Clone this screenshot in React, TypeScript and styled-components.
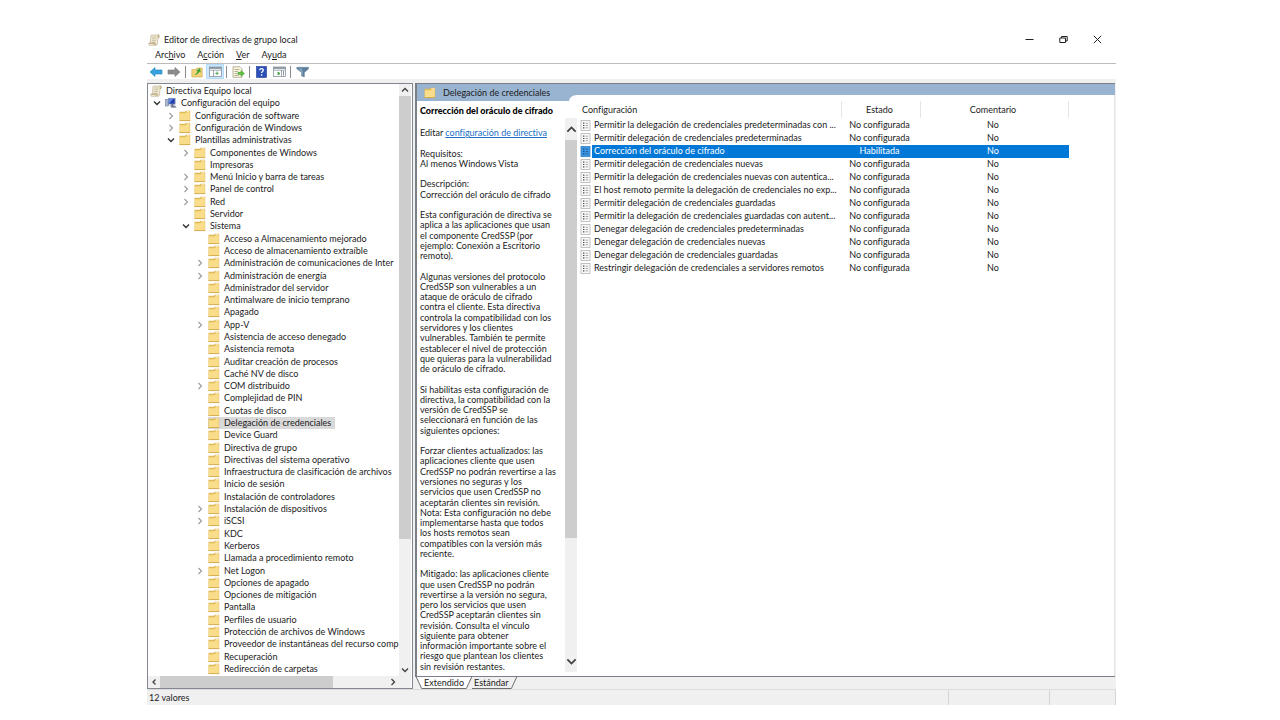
import React from "react";
import styled, { createGlobalStyle, css } from "styled-components";

const Global = createGlobalStyle`
  * { box-sizing: border-box; }
  body {
    margin: 0;
    background: #fff;
    color: #1b1b1b;
    font: 9px/12px Lato, "Open Sans", sans-serif;
    font-variant-ligatures: none;
  }
  button { font: inherit; color: inherit; background: none; border: 0; padding: 0; margin: 0; }
  svg { display: block; flex: none; }
`;

const Page = styled.div`
  min-height: 100vh;
  padding: 32px 164px 15px 147px;
  display: flex;
  flex-direction: column;
`;
const Window = styled.div`
  flex: 1;
  display: flex;
  flex-direction: column;
`;
const TitleBar = styled.header`
  height: 15px;
  padding: 0 2px 0 1px;
  display: flex;
  align-items: center;
  gap: 4px;
`;
const Title = styled.h1`
  margin: 0;
  flex: 1;
  font-size: 9px;
  font-weight: 400;
`;
const WindowButton = styled.button`
  width: 34px;
  height: 14px;
  display: flex;
  justify-content: center;
  align-items: center;
`;
const WindowButtons = styled.div`
  display: flex;
`;
const MenuBar = styled.nav`
  height: 16px;
  display: flex;
  align-items: center;
  padding-left: 2px;
`;
const MenuButton = styled.button`
  padding: 0 6px;
`;
const Toolbar = styled.div`
  height: 16px;
  border-top: 1px solid #bcbcbc;
  display: flex;
  align-items: center;
`;
const ToolButton = styled.button<{ $on?: boolean }>`
  width: 18px;
  height: 15px;
  display: flex;
  align-items: center;
  justify-content: center;
  ${(p) => p.$on && css`background: #cce8ff; box-shadow: inset 0 0 0 1px #b4dcf8;`}
`;
const Separator = styled.span`
  width: 1px;
  height: 12px;
  margin: 0 2px;
  background: #8a8a8a;
`;
const Main = styled.main`
  flex: 1;
  display: flex;
  gap: 2px;
  padding-top: 4px;
  background: #f0f0f0;
`;

/* Tree pane */
const TreePane = styled.section`
  width: 266px;
  flex: none;
  border: 1px solid #828790;
  background: #fff;
  display: flex;
  flex-direction: column;
  padding-right: 1px;
`;
const TreeArea = styled.div`
  flex: 1;
  display: flex;
`;
const Tree = styled.ul`
  list-style: none;
  margin: 0;
  padding: 1px 0;
  flex: 1;
  min-width: 0;
  overflow: hidden;
  display: grid;
  grid-auto-rows: minmax(12px, 1fr);
`;
const indents = [2, 3, 17, 32, 46];
const TreeRow = styled.li<{ $level: number }>`
  padding-left: ${(p) => indents[p.$level]}px;
  display: flex;
  align-items: center;
  white-space: nowrap;
`;
const Twisty = styled.button`
  width: 14px;
  flex: none;
  padding-left: 2px;
`;
const TreeLabel = styled.span<{ $selected?: boolean }>`
  display: flex;
  align-items: center;
  gap: 4px;
  height: 12px;
  padding-right: 4px;
  background: ${(p) => (p.$selected ? "#d9d9d9" : "transparent")};
`;

/* Scroll bars */
const Track = styled.div<{ $horizontal?: boolean }>`
  flex: none;
  background: #f0f0f0;
  display: flex;
  flex-direction: ${(p) => (p.$horizontal ? "row" : "column")};
  ${(p) => (p.$horizontal ? "height: 12px; padding-right: 12px;" : "width: 12px;")}
`;
const ScrollButton = styled.button`
  width: 12px;
  height: 12px;
  display: flex;
  align-items: center;
  justify-content: center;
`;
const TallScrollButton = styled(ScrollButton)`
  height: 22px;
`;
const Groove = styled.div<{ $horizontal?: boolean }>`
  flex: 1;
  display: flex;
  flex-direction: ${(p) => (p.$horizontal ? "row" : "column")};
`;
const Thumb = styled.div<{ $share: number }>`
  flex: 0 0 ${(p) => p.$share}%;
  background: #cdcdcd;
`;

/* Detail pane */
const DetailPane = styled.section`
  flex: 1;
  min-width: 0;
  display: flex;
  flex-direction: column;
`;
const DetailFrame = styled.div`
  flex: 1;
  display: flex;
  margin-right: 1px;
  border: solid #7b8088;
  border-width: 1px 0 1px 2px;
  background: #99b4d1;
`;
const InfoColumn = styled.div`
  width: 160px;
  flex: none;
  display: flex;
  flex-direction: column;
`;
const InfoHeader = styled.div`
  height: 17px;
  display: flex;
  align-items: center;
  gap: 7px;
  padding-left: 7px;
`;
const InfoHeading = styled.h2`
  margin: 0;
  flex: 1;
  font-size: 9px;
  font-weight: 400;
`;
const Curve = styled.span`
  align-self: flex-end;
  width: 8px;
  height: 6px;
  background: #fff;
  border-top-left-radius: 8px 6px;
`;
const PolicyName = styled.h3`
  margin: 0;
  height: 17px;
  padding-left: 3px;
  background: #fff;
  font-size: 9px;
  font-weight: 900;
  line-height: 19px;
  white-space: nowrap;
  color: #000;
`;
const InfoBody = styled.div`
  flex: 1;
  display: flex;
  background: #fff;
  padding-bottom: 4px;
`;
const InfoText = styled.div`
  flex: 1;
  padding: 10px 0 0 3px;
  display: grid;
  grid-auto-rows: minmax(10px, 1fr);
  line-height: 10px;
  white-space: nowrap;
`;
const Paragraph = styled.p`
  display: contents;
  &:not(:last-child)::after { content: ""; }
`;
const Link = styled.a`
  color: #1a6fc4;
`;
const ListColumn = styled.div`
  flex: 1;
  min-width: 0;
  margin-top: 11px;
  background: #fff;
  border-right: 1px solid #e3e3e3;
`;
const Table = styled.table`
  width: 492px;
  table-layout: fixed;
  border-collapse: separate;
  border-spacing: 0;
`;
const HeadCell = styled.th<{ $width: number; $left?: boolean }>`
  width: ${(p) => p.$width}px;
  height: 24px;
  padding: 6px 0 1px;
  font-weight: 400;
  text-align: ${(p) => (p.$left ? "left" : "center")};
`;
const HeadLabel = styled.span<{ $left?: boolean }>`
  display: block;
  height: 17px;
  line-height: 17px;
  padding: ${(p) => (p.$left ? "0 0 0 5px" : "0 3px 0 0")};
  border-right: 1px solid #e5e5e5;
`;
const Cell = styled.td<{ $selected?: boolean }>`
  height: 13px;
  padding: 0 4px 0 0;
  line-height: 11px;
  vertical-align: top;
  text-align: center;
  ${(p) => p.$selected && css`background: #0078d7; color: #fff;`}
`;
const NameCell = styled.td`
  height: 13px;
  padding: 0 0 0 3px;
  line-height: 11px;
`;
const NameContent = styled.div`
  display: flex;
  align-items: center;
  gap: 1px;
`;
const PolicyLabel = styled.span<{ $selected?: boolean }>`
  flex: 1;
  height: 13px;
  padding-left: 2px;
  white-space: nowrap;
  ${(p) => p.$selected && css`background: #0078d7; color: #fff;`}
`;
const Tabs = styled.div`
  height: 12px;
  display: flex;
  padding-left: 1px;
`;
const Tab = styled.button<{ $active?: boolean }>`
  height: 12px;
  padding: 0 2px;
  line-height: 12px;
  border-bottom: 1px solid #6d6d6d;
  background: ${(p) => (p.$active ? "#fff" : "#f0f0f0")};
`;
const StatusBar = styled.footer`
  height: 16px;
  display: flex;
  background: #f0f0f0;
  border-top: 1px solid #dcdcdc;
  line-height: 16px;
`;
const StatusCell = styled.span<{ $width?: number }>`
  flex: ${(p) => (p.$width ? `0 0 ${p.$width}px` : "1")};
  padding-left: 2px;
  border-right: 1px solid #d4d4d4;
`;

const Folder = () => (
  <svg width="12" height="12" viewBox="0 0 12 12" aria-hidden="true">
    <path d="M.5 1.800h5.300l1-1h4.400v10H.5z" fill="#dfb955" />
    <path d="M.9 3.300h5.500l1-1h3.400v8.100H.9z" fill="#f9dd8b" />
    <path d="M7.500 1.600h3" stroke="#fff6d5" strokeWidth=".8" />
    <path d="M.4 10.600h10.900" stroke="#cfa342" strokeWidth=".8" />
  </svg>
);
const Scroll = () => (
  <svg width="12" height="12" viewBox="0 0 12 12" aria-hidden="true">
    <path d="M3 1h8.200c-1 .5-1 1.500-1 2.500L9.400 10c-.2 1-.8 1.300-1.600 1.300H1.200c-.9-.4-.7-1.800 0-2.200H2.300z" fill="#f2ead2" stroke="#b5ab90" strokeWidth=".6" />
    <path d="M4.300 3h4.200M4 4.800h4.200M3.800 6.600H8M3.600 8.400h4" stroke="#b0a78f" strokeWidth=".6" />
    <path d="M9.600 1.200c1.500-.4 2.200.9 1.500 2.200H9.800M1 9.200h6.200c-.4.9 0 1.800.6 2.100" fill="#d9caa0" stroke="#a08f63" strokeWidth=".6" />
  </svg>
);
const Computer = () => (
  <svg width="12" height="12" viewBox="0 0 12 12" aria-hidden="true">
    <rect x=".5" y="2.500" width="3" height="6.500" fill="#a8b7cc" stroke="#71809a" strokeWidth=".6" />
    <rect x="3.300" y="1.300" width="6.800" height="5.800" fill="#1d3fb0" stroke="#8c9bb5" strokeWidth=".8" />
    <path d="M4 6.800V2h4z" fill="#5d8ae6" />
    <path d="M5 8.600h5l1.700 2.200H6.200z" fill="#7b889d" />
    <path d="M6.500 7.300h1.800v1.500H6.500z" fill="#414d66" />
  </svg>
);
const PolicyIcon = ({ selected }: { selected?: boolean }) => (
  <svg width="11" height="11" viewBox="0 0 11 11" aria-hidden="true">
    <rect x="1" y=".5" width="9" height="10" fill={selected ? "#3f94df" : "#fafafa"} stroke={selected ? "#2b7fc9" : "#b4b4b4"} strokeWidth=".8" />
    <path d="M3 3.200h1.400M3 5.500h1.400M3 7.800h1.400" stroke={selected ? "#0c4a8c" : "#444"} strokeWidth="1.200" />
    <path d="M5.700 3.200H8.200M5.700 5.500H8.200M5.700 7.800H8.200" stroke={selected ? "#195ea5" : "#8f8f8f"} strokeWidth=".8" />
  </svg>
);

type Dir = "up" | "down" | "left" | "right";
const chevrons: Record<Dir, string> = {
  up: "M1 5.500 4 2.500 7 5.500",
  down: "M1 2.500 4 5.500 7 2.500",
  left: "M5.500 1.500 3 4 5.500 6.500",
  right: "M2.500 1 5.500 4 2.500 7",
};
const Chevron = ({ dir, color = "#404040", size = 8, weight = 1.3 }: { dir: Dir; color?: string; size?: number; weight?: number }) => (
  <svg width={size} height={size} viewBox="0 0 8 8" aria-hidden="true">
    <path d={chevrons[dir]} fill="none" stroke={color} strokeWidth={weight} />
  </svg>
);

const Arrow = ({ back }: { back?: boolean }) => (
  <svg width="14" height="12" viewBox="0 0 14 12" aria-hidden="true">
    {back ? (
      <path d="M1 6 6 1.500V4h7v4H6v2.500z" fill="#37a3e0" stroke="#1f7fbd" strokeWidth=".6" />
    ) : (
      <path d="M13 6 8 1.500V4H1v4h7v2.500z" fill="#8c8c8c" stroke="#757575" strokeWidth=".6" />
    )}
  </svg>
);
const FolderUp = () => (
  <svg width="12" height="12" viewBox="0 0 12 12" aria-hidden="true">
    <path d="M.8 3.500h4l1-1.500h5.400v9H.8z" fill="#f2d27a" stroke="#cfa548" strokeWidth=".6" />
    <path d="M3 8.500c2-.5 3-1.500 3.600-3L5.200 4.800 9 2l.8 4.400-1.500-.6C7.500 8 5.500 9 3 8.500z" fill="#3fa535" />
  </svg>
);
const PaneIcon = ({ right }: { right?: boolean }) => (
  <svg width="13" height="11" viewBox="0 0 13 11" aria-hidden="true">
    <rect x=".5" y="1" width="12" height="9.500" fill="#fff" stroke="#8894a0" strokeWidth=".8" />
    <path d="M.5 2h12" stroke="#7e8a96" strokeWidth="1.600" />
    <path d="M.5 4.200h12" stroke="#a2acb6" strokeWidth="1" />
    <path d={right ? "M8.500 4v6.500" : "M4.500 4v6.500"} stroke="#8894a0" strokeWidth=".8" />
    <path d={right ? "M5 6v3l2-1.500z" : "M8 5.500V9M6.300 7.300h3.400"} fill="#4aa54a" stroke="#4aa54a" strokeWidth=".9" />
    {right && <path d="M10.500 5v4.500" stroke="#8894a0" strokeWidth="1" />}
  </svg>
);
const ExportIcon = () => (
  <svg width="13" height="12" viewBox="0 0 13 12" aria-hidden="true">
    <path d="M1 .8h7l2 2v8.500H1z" fill="#fdf8df" stroke="#9a9478" strokeWidth=".7" />
    <path d="M2.500 3.500h5M2.500 5.500h3.500M2.500 7.500h3M2.500 9.500h4" stroke="#8f8b7a" strokeWidth=".7" />
    <path d="M6 6.300h3V4.500L12.500 7.500 9 10.300V8.500H6z" fill="#5cc043" stroke="#3d9a2b" strokeWidth=".5" />
  </svg>
);
const HelpIcon = () => (
  <svg width="11" height="12" viewBox="0 0 11 12" aria-hidden="true">
    <rect x=".5" y=".5" width="10" height="11" fill="#2c50b8" stroke="#1d3a8f" strokeWidth=".6" />
    <path d="M3.800 4.300c0-2.400 3.600-2.200 3.500-.2 0 1.400-1.700 1.300-1.700 3M5.600 8.300v1.400" fill="none" stroke="#fff" strokeWidth="1.300" />
  </svg>
);
const FilterIcon = () => (
  <svg width="13" height="12" viewBox="0 0 13 12" aria-hidden="true">
    <path d="M.8 1.300h11.800v1.500L8.400 6.500V11l-2.800-1V6.500L.8 2.800z" fill="#5b7f9c" stroke="#547591" strokeWidth=".4" />
    <path d="M2 2.600h4L6.800 6v3.500l-1-.4V6.300z" fill="#86a6bd" />
  </svg>
);

type Node = [level: number, label: string, state?: "open" | "closed"];
const nodes: Node[] = [
  [0, "Directiva Equipo local"],
  [1, "Configuración del equipo", "open"],
  [2, "Configuración de software", "closed"],
  [2, "Configuración de Windows", "closed"],
  [2, "Plantillas administrativas", "open"],
  [3, "Componentes de Windows", "closed"],
  [3, "Impresoras"],
  [3, "Menú Inicio y barra de tareas", "closed"],
  [3, "Panel de control", "closed"],
  [3, "Red", "closed"],
  [3, "Servidor"],
  [3, "Sistema", "open"],
  [4, "Acceso a Almacenamiento mejorado"],
  [4, "Acceso de almacenamiento extraíble"],
  [4, "Administración de comunicaciones de Inter", "closed"],
  [4, "Administración de energía", "closed"],
  [4, "Administrador del servidor"],
  [4, "Antimalware de inicio temprano"],
  [4, "Apagado"],
  [4, "App-V", "closed"],
  [4, "Asistencia de acceso denegado"],
  [4, "Asistencia remota"],
  [4, "Auditar creación de procesos"],
  [4, "Caché NV de disco"],
  [4, "COM distribuido", "closed"],
  [4, "Complejidad de PIN"],
  [4, "Cuotas de disco"],
  [4, "Delegación de credenciales"],
  [4, "Device Guard"],
  [4, "Directiva de grupo"],
  [4, "Directivas del sistema operativo"],
  [4, "Infraestructura de clasificación de archivos"],
  [4, "Inicio de sesión"],
  [4, "Instalación de controladores"],
  [4, "Instalación de dispositivos", "closed"],
  [4, "iSCSI", "closed"],
  [4, "KDC"],
  [4, "Kerberos"],
  [4, "Llamada a procedimiento remoto"],
  [4, "Net Logon", "closed"],
  [4, "Opciones de apagado"],
  [4, "Opciones de mitigación"],
  [4, "Pantalla"],
  [4, "Perfiles de usuario"],
  [4, "Protección de archivos de Windows"],
  [4, "Proveedor de instantáneas del recurso comp"],
  [4, "Recuperación"],
  [4, "Redirección de carpetas"],
];

const paragraphs: string[][] = [
  ["Requisitos:", "Al menos Windows Vista"],
  ["Descripción:", "Corrección del oráculo de cifrado"],
  ["Esta configuración de directiva se", "aplica a las aplicaciones que usan", "el componente CredSSP (por", "ejemplo: Conexión a Escritorio", "remoto)."],
  ["Algunas versiones del protocolo", "CredSSP son vulnerables a un", "ataque de oráculo de cifrado", "contra el cliente. Esta directiva", "controla la compatibilidad con los", "servidores y los clientes", "vulnerables. También te permite", "establecer el nivel de protección", "que quieras para la vulnerabilidad", "de oráculo de cifrado."],
  ["Si habilitas esta configuración de", "directiva, la compatibilidad con la", "versión de CredSSP se", "seleccionará en función de las", "siguientes opciones:"],
  ["Forzar clientes actualizados: las", "aplicaciones cliente que usen", "CredSSP no podrán revertirse a las", "versiones no seguras y los", "servicios que usen CredSSP no", "aceptarán clientes sin revisión.", "Nota: Esta configuración no debe", "implementarse hasta que todos", "los hosts remotos sean", "compatibles con la versión más", "reciente."],
  ["Mitigado: las aplicaciones cliente", "que usen CredSSP no podrán", "revertirse a la versión no segura,", "pero los servicios que usen", "CredSSP aceptarán clientes sin", "revisión. Consulta el vínculo", "siguiente para obtener", "información importante sobre el", "riesgo que plantean los clientes", "sin revisión restantes."],
];

const policies = [
  "Permitir la delegación de credenciales predeterminadas con ...",
  "Permitir delegación de credenciales predeterminadas",
  "Corrección del oráculo de cifrado",
  "Permitir delegación de credenciales nuevas",
  "Permitir la delegación de credenciales nuevas con autentica...",
  "El host remoto permite la delegación de credenciales no exp...",
  "Permitir delegación de credenciales guardadas",
  "Permitir la delegación de credenciales guardadas con autent...",
  "Denegar delegación de credenciales predeterminadas",
  "Denegar delegación de credenciales nuevas",
  "Denegar delegación de credenciales guardadas",
  "Restringir delegación de credenciales a servidores remotos",
];
const selectedPolicy = "Corrección del oráculo de cifrado";
const selectedNode = "Delegación de credenciales";

const Slant = ({ falling, left, right }: { falling?: boolean; left: string; right: string }) => (
  <svg width="6" height="12" viewBox="0 0 6 12" aria-hidden="true">
    <path d={falling ? "M0 0 5.500 12H0z" : "M6 0 .5 12H0V0z"} fill={left} />
    <path d={falling ? "M0 0 5.500 12H6V0z" : "M6 0 .5 12H6z"} fill={right} />
    <path d={falling ? "M.3 0 5.700 11.700" : "M5.700 0 .3 11.700"} stroke="#6d6d6d" strokeWidth="1" />
  </svg>
);

export default function App() {
  return (
    <Page>
      <Global />
      <Window>
        <TitleBar>
          <Scroll />
          <Title>Editor de directivas de grupo local</Title>
          <WindowButtons>
            <WindowButton aria-label="Minimizar">
              <svg width="9" height="9" viewBox="0 0 9 9"><path d="M.5 4.500h8" stroke="#222" /></svg>
            </WindowButton>
            <WindowButton aria-label="Restaurar">
              <svg width="9" height="9" viewBox="0 0 9 9"><path d="M.8 3h5.700v4.500H.8zM2.500 3V1.500h5.700V6H6.500" fill="none" stroke="#222" /></svg>
            </WindowButton>
            <WindowButton aria-label="Cerrar">
              <svg width="9" height="9" viewBox="0 0 9 9"><path d="m.8.8 7.400 7.400m0-7.400L.8 8.200" stroke="#222" /></svg>
            </WindowButton>
          </WindowButtons>
        </TitleBar>
        <MenuBar>
          <MenuButton>Arc<u>h</u>ivo</MenuButton>
          <MenuButton>A<u>c</u>ción</MenuButton>
          <MenuButton><u>V</u>er</MenuButton>
          <MenuButton>Ay<u>u</u>da</MenuButton>
        </MenuBar>
        <Toolbar>
          <ToolButton aria-label="Atrás"><Arrow back /></ToolButton>
          <ToolButton aria-label="Adelante"><Arrow /></ToolButton>
          <Separator />
          <ToolButton aria-label="Subir un nivel"><FolderUp /></ToolButton>
          <ToolButton $on aria-label="Mostrar u ocultar árbol"><PaneIcon /></ToolButton>
          <Separator />
          <ToolButton aria-label="Exportar lista"><ExportIcon /></ToolButton>
          <Separator />
          <ToolButton aria-label="Ayuda"><HelpIcon /></ToolButton>
          <ToolButton aria-label="Mostrar panel de acciones"><PaneIcon right /></ToolButton>
          <Separator />
          <ToolButton aria-label="Filtro"><FilterIcon /></ToolButton>
        </Toolbar>
        <Main>
          <TreePane>
            <TreeArea>
              <Tree>
                {nodes.map(([level, label, state]) => (
                  <TreeRow key={label} $level={level}>
                    {level > 0 && (
                      <Twisty aria-label={state ? label : undefined} disabled={!state}>
                        {state && <Chevron dir={state === "open" ? "down" : "right"} color={state === "open" ? "#333" : "#9a9a9a"} weight={state === "open" ? 1.4 : 1.1} />}
                      </Twisty>
                    )}
                    <TreeLabel $selected={label === selectedNode}>
                      {level === 0 ? <Scroll /> : level === 1 ? <Computer /> : <Folder />}
                      {label}
                    </TreeLabel>
                  </TreeRow>
                ))}
              </Tree>
              <Track>
                <ScrollButton aria-label="Arriba"><Chevron dir="up" /></ScrollButton>
                <Groove><Thumb $share={78} /></Groove>
                <ScrollButton aria-label="Abajo"><Chevron dir="down" /></ScrollButton>
              </Track>
            </TreeArea>
            <Track $horizontal>
              <ScrollButton aria-label="Izquierda"><Chevron dir="left" /></ScrollButton>
              <Groove $horizontal><Thumb $share={76} /></Groove>
              <ScrollButton aria-label="Derecha"><Chevron dir="right" /></ScrollButton>
            </Track>
          </TreePane>
          <DetailPane>
            <DetailFrame>
              <InfoColumn>
                <InfoHeader>
                  <Folder />
                  <InfoHeading>Delegación de credenciales</InfoHeading>
                  <Curve />
                </InfoHeader>
                <PolicyName>{selectedPolicy}</PolicyName>
                <InfoBody>
                  <InfoText>
                    <Paragraph>
                      <span>Editar <Link href="#directiva">configuración de directiva</Link></span>
                    </Paragraph>
                    {paragraphs.map((lines) => (
                      <Paragraph key={lines[0]}>
                        {lines.map((line) => <span key={line}>{line}</span>)}
                      </Paragraph>
                    ))}
                  </InfoText>
                  <Track>
                    <TallScrollButton aria-label="Arriba"><Chevron dir="up" size={11} /></TallScrollButton>
                    <Groove><Thumb $share={78} /></Groove>
                    <TallScrollButton aria-label="Abajo"><Chevron dir="down" size={11} /></TallScrollButton>
                  </Track>
                </InfoBody>
              </InfoColumn>
              <ListColumn>
                <Table>
                  <thead>
                    <tr>
                      <HeadCell $width={265} $left><HeadLabel $left>Configuración</HeadLabel></HeadCell>
                      <HeadCell $width={79}><HeadLabel>Estado</HeadLabel></HeadCell>
                      <HeadCell $width={148}><HeadLabel>Comentario</HeadLabel></HeadCell>
                    </tr>
                  </thead>
                  <tbody>
                    {policies.map((name) => {
                      const selected = name === selectedPolicy;
                      return (
                        <tr key={name}>
                          <NameCell>
                            <NameContent>
                              <PolicyIcon selected={selected} />
                              <PolicyLabel $selected={selected}>{name}</PolicyLabel>
                            </NameContent>
                          </NameCell>
                          <Cell $selected={selected}>{selected ? "Habilitada" : "No configurada"}</Cell>
                          <Cell $selected={selected}>No</Cell>
                        </tr>
                      );
                    })}
                  </tbody>
                </Table>
              </ListColumn>
            </DetailFrame>
            <Tabs>
              <Slant falling left="#f0f0f0" right="#fff" />
              <Tab $active>Extendido</Tab>
              <Slant left="#fff" right="#f0f0f0" />
              <Tab>Estándar</Tab>
              <Slant left="#f0f0f0" right="#f0f0f0" />
            </Tabs>
          </DetailPane>
        </Main>
        <StatusBar>
          <StatusCell>12 valores</StatusCell>
          <StatusCell $width={101} />
          <StatusCell $width={66} />
        </StatusBar>
      </Window>
    </Page>
  );
}
